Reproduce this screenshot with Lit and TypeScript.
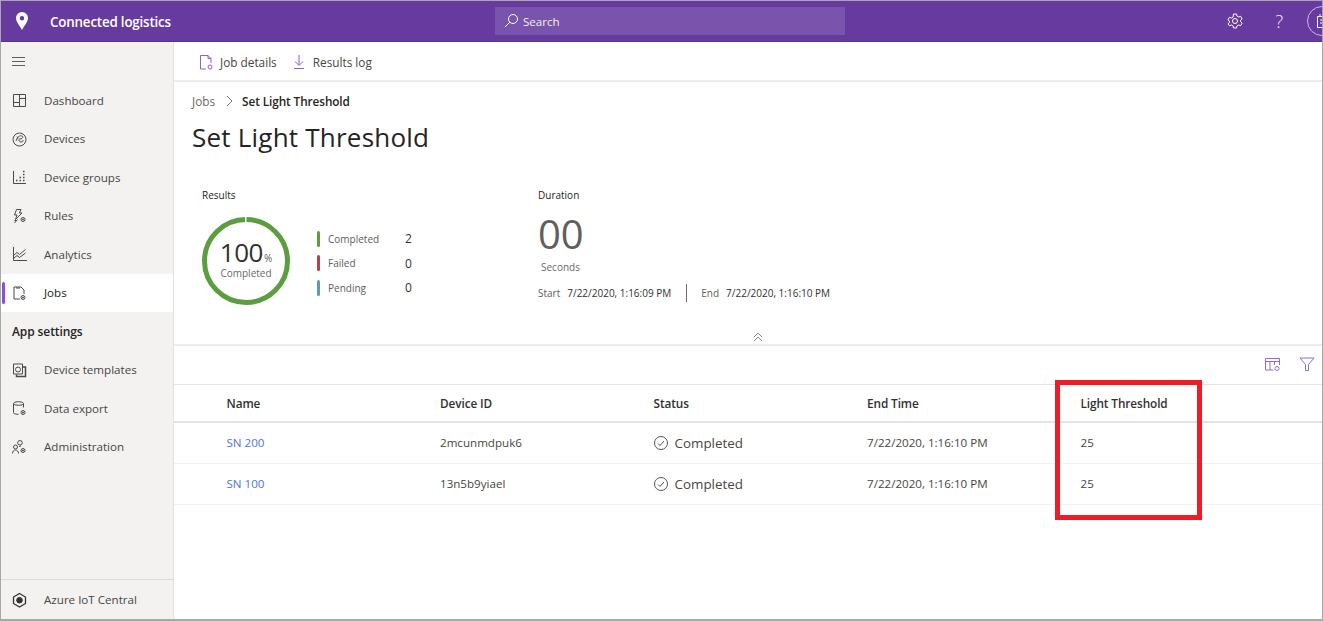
import { LitElement, html, css, svg } from "lit";
import { customElement } from "lit/decorators.js";

const ic = (body: unknown, size = 16, vb = 16) => html`<svg class="ic" width=${size} height=${size} viewBox="0 0 ${vb} ${vb}" fill="none" stroke="currentColor" stroke-width="1">${body}</svg>`;

const gear = (x: number, y: number) => svg`<circle cx=${x} cy=${y} r="2" /><circle cx=${x} cy=${y} r="0.6" fill="currentColor"/>`;

const icons = {
  dashboard: svg`<path d="M2.500 2.500h12v12h-12zM2.500 10.500h6M8.500 2.500v12M8.500 6.500h6"/>`,
  devices: svg`<circle cx="8.500" cy="8.500" r="6.500"/><path d="M5 10c1-4 4-6 6-5s0 3-2 3 -1 3 1 3 2-1 2-2M6 5.500c1 1 1 2 0 3"/>`,
  groups: svg`<path d="M2.500 2v12.500H15"/><path d="M5 11.500h1.500M8.500 11.500h1.500M12 11.500h1.500M8.500 8.500h1.500M12 8.500h1.500M12 5.500h1.500M12 2.500h1.500" stroke-width="1.500"/>`,
  rules: svg`<path d="M5.500 1.500h4.500L8.500 5H11L4.500 11.500 6 7H3.500z"/><path d="M6.500 11.500L3.500 15M3.500 12.500h2"/>${gear(12, 11.5)}`,
  analytics: svg`<path d="M2.500 1v13.500H16"/><path d="M2.500 9.500l3.500-3 2.500 2 6-5M2.500 12.500l3.500-3 2.500 2 6-4.500"/>`,
  jobs: svg`<path d="M9 14H3V2h7l3 3v4"/><path d="M6 2v2M8 2v2"/>${gear(12, 12.500)}`,
  templates: svg`<path d="M2.500 2h9v10h-9z"/><path d="M12 5h2.500v9.500H5.500V12.500" stroke-width="1.500"/><circle cx="7" cy="7.500" r="2.500"/>`,
  exportData: svg`<ellipse cx="7.500" cy="3.500" rx="5" ry="1.800"/><path d="M2.500 3.500v9c0 1 1.500 1.800 5 1.800M12.500 3.500v4"/>${gear(12, 12.500)}`,
  admin: svg`<circle cx="9" cy="3.800" r="2.300"/><circle cx="4.500" cy="8" r="2"/><path d="M1.500 14.500c0-2 1.300-3.500 3-3.500s3 1.500 3 3.500M8 8c.5-.8 1-1 2-1"/>${gear(12, 11.500)}`,
  azure: svg`<path d="M8.500 1.500l6 3.500v6.500l-6 3.500-6-3.500V5z" stroke-width="1.300"/><circle cx="8.500" cy="8.200" r="2.800" fill="currentColor"/>`,
};

type NavKey = keyof typeof icons;
const top: [NavKey, string][] = [
  ["dashboard", "Dashboard"], ["devices", "Devices"], ["groups", "Device groups"],
  ["rules", "Rules"], ["analytics", "Analytics"],
];
const settings: [NavKey, string][] = [
  ["templates", "Device templates"], ["exportData", "Data export"], ["admin", "Administration"],
];

const rows = [
  ["SN 200", "2mcunmdpuk6"],
  ["SN 100", "13n5b9yiael"],
];

@customElement("app-root")
export class AppRoot extends LitElement {
  static styles = css`
    :host { display: block; width: 1323px; height: 621px; position: relative; overflow: hidden; background: #fff;
      font-family: "Open Sans", "Noto Sans", sans-serif; color: #323130; font-size: 11.6px; box-sizing: border-box; }
    * { box-sizing: border-box; }
    .ic { display: block; flex: none; }
    .frame { height: 100%; display: flex; flex-direction: column; border: 1px solid #a8a8a8; border-width: 1px 1px 2px 1px; }
    .hdr { height: 41px; flex: none; background: #673aa0; color: #fff; display: flex; align-items: center; border-bottom: 1px solid #5a3290; position: relative; overflow: hidden; }
    .pin { margin-left: 14px; width: 14px; }
    .brand { margin-left: 21px; font-size: 13.4px; font-weight: 600; width: 445px; letter-spacing: -0.2px; white-space: nowrap; padding-top: 2px; }
    .search { width: 350px; height: 28px; background: #7a53ad; display: flex; align-items: center; padding-left: 8px; gap: 4px; font-size: 11.6px; color: #f1ecf7; }
    .hdr-right { margin-left: auto; display: flex; align-items: center; }
    .gear { margin-right: 32px; }
    .q { font-size: 18px; margin-right: 24px; line-height: 1; font-weight: 300; color: #f3eef9; }
    .avatar { width: 30px; height: 30px; border: 1px solid #c9b8e0; border-radius: 50%; margin-right: -15px; display: flex; align-items: center; padding-left: 8px; }
    .body { flex: 1; display: flex; min-height: 0; }
    .side { width: 173px; flex: none; background: #f3f2f1; border-right: 1px solid #e4e2e0; display: flex; flex-direction: column; }
    .burger { height: 39px; padding-left: 10px; display: flex; align-items: center; color: #605e5c; flex: none; }
    .nav { height: 38.500px; flex: none; display: flex; align-items: center; color: #484644; position: relative; white-space: nowrap; }
    .nav .ic { margin-left: 10px; margin-right: 17px; color: #4a4a4a; }
    .nav.active { background: #fff; color: #252423; }
    .nav.active::before { content: ""; position: absolute; left: 1px; top: 8px; bottom: 8px; width: 3px; background: #8a4fe0; border-radius: 2px; }
    .section { height: 38.500px; flex: none; display: flex; align-items: center; padding-left: 11px; color: #252423; font-weight: 600; font-size: 12px; letter-spacing: -0.1px; }
    .side-foot { margin-top: auto; height: 40px; border-top: 1px solid #dcdad8; display: flex; align-items: center; color: #484644; }
    .side-foot .ic { margin-left: 10px; margin-right: 17px; color: #333; }
    .main { flex: 1; min-width: 0; display: flex; flex-direction: column; }
    .tools { height: 40px; flex: none; border-bottom: 2px solid #ececec; display: flex; align-items: center; padding-left: 24px; color: #484644; padding-top: 1px; font-size: 11.800px; }
    .tool { display: flex; align-items: center; gap: 6px; margin-right: 14px; }
    .tool .ic { color: #8a5ce0; }
    .crumb { display: flex; align-items: center; margin: 9px 0 0 18px; height: 20px; font-size: 11.800px; }
    .crumb .jobs { color: #6b6967; }
    .crumb .ic { margin: 0 7px 0 8px; color: #777; }
    .crumb b { font-weight: 600; color: #252423; letter-spacing: -0.1px; }
    h1 { margin: 7px 0 0 18px; font-size: 26px; font-weight: 400; line-height: 38px; color: #252423; letter-spacing: 0.22px; }
    .summary { display: flex; margin-top: 32px; height: 147px; flex: none; }
    .results { width: 364px; padding-left: 28px; }
    .lbl { font-size: 10px; line-height: 14px; color: #252423; }
    .res-row { display: flex; align-items: center; margin-top: 15px; }
    .ring { width: 88px; height: 88px; position: relative; flex: none; }
    .ring svg { position: absolute; left: 0; top: 0; }
    .ring-text { position: absolute; inset: 0; display: flex; flex-direction: column; align-items: center; justify-content: center; }
    .pct { font-size: 26px; line-height: 26px; color: #323130; margin: -5px 0 -4px; letter-spacing: -0.5px; }
    .pct small { font-size: 10px; color: #605e5c; margin-left: 1px; letter-spacing: 0; }
    .ring-text span.c { font-size: 10px; line-height: 12px; color: #6b6967; }
    .legend { margin-left: 27px; margin-top: 4px; display: flex; flex-direction: column; gap: 8.500px; }
    .lg { display: flex; align-items: center; height: 16px; font-size: 10px; color: #605e5c; }
    .bar { width: 3px; height: 16px; border-radius: 2px; margin-right: 8px; }
    .lg span { width: 77px; }
    .lg b { font-weight: 400; font-size: 12px; color: #323130; }
    .duration { flex: 1; }
    .dur-num { font-size: 40px; line-height: 48px; color: #5f5f5f; margin-top: 8px; letter-spacing: 0; }
    .secs { font-size: 10px; line-height: 14px; color: #6b6967; margin-left: 3px; margin-top: 2px; }
    .times { display: flex; align-items: center; font-size: 10px; margin-top: 10px; color: #323130; height: 18px; }
    .times .k { color: #605e5c; margin-right: 7px; }
    .times .sep { width: 1px; height: 18px; background: #6b6967; margin: 0 14px 0 15px; }
    .collapse { height: 12px; display: flex; justify-content: center; color: #8f8d8b; flex: none; margin-top: -3px; padding-left: 20px; }
    .line { height: 2px; background: #ececec; flex: none; }
    .tbl-tools { height: 39px; flex: none; display: flex; justify-content: flex-end; align-items: center; gap: 19px; padding-right: 7px; color: #8a6ce0; border-bottom: 1px solid #e4e4e4; padding-bottom: 2px; }
    .tr { display: grid; grid-template-columns: repeat(5, 213.500px); padding-left: 52.500px; align-items: center; border-bottom: 1px solid #f1f1f1; }
    .th { height: 38px; font-weight: 600; font-size: 11.800px; color: #323130; border-bottom: 2px solid #e4e4e4; letter-spacing: -0.1px; }
    .td { height: 41px; color: #484644; padding-bottom: 2px; }
    .td a { color: #4a74e8; text-decoration: none; }
    .status { display: flex; align-items: center; gap: 7px; font-size: 13.400px; color: #484644; margin-bottom: -2px; }
    .status .ic { color: #555; }
    .mark { position: absolute; left: 1055px; top: 380px; width: 147px; height: 140px; border: 5px solid #ee1c25; }
  `;

  render() {
    return html`
      <div class="frame">
        <header class="hdr">
          <svg class="pin" width="14" height="18" viewBox="0 0 14 18"><path fill="#fff" fill-rule="evenodd" d="M7 0a6 6 0 0 1 6 6c0 4-4 8-6 12C5 14 1 10 1 6a6 6 0 0 1 6-6zm0 4a2.200 2.200 0 1 0 0 4.400A2.200 2.200 0 0 0 7 4z"/></svg>
          <div class="brand">Connected logistics</div>
          <div class="search">
            <svg width="16" height="16" viewBox="0 0 16 16" fill="none" stroke="#fff"><circle cx="10" cy="6" r="4.500"/><path d="M6.800 9.200 2 14"/></svg>
            Search
          </div>
          <div class="hdr-right">
            <svg class="gear" width="16" height="16" viewBox="0 0 16 16" fill="none" stroke="#fff"><circle cx="8" cy="8" r="2.500"/><path d="M6.500 1h3l.4 2 1.700 1 2-.7 1.500 2.600-1.500 1.300v1.600l1.500 1.300-1.500 2.600-2-.7-1.700 1-.4 2h-3l-.4-2-1.700-1-2 .7L.9 10.900l1.500-1.300V8L.9 6.900l1.500-2.600 2 .7 1.700-1z"/></svg>
            <span class="q">?</span>
            <div class="avatar"><svg width="14" height="16" viewBox="0 0 14 16" fill="none" stroke="#fff"><path d="M1.500 3.500h11v11h-11zM4 1v3M10 1v3M4 7h6M4 10h4"/></svg></div>
          </div>
        </header>
        <div class="body">
          <nav class="side">
            <div class="burger">${ic(svg`<path d="M1 3.500h13M1 7.500h13M1 11.500h13" />`, 15, 15)}</div>
            ${top.map(([k, t]) => html`<div class="nav">${ic(icons[k])}${t}</div>`)}
            <div class="nav active">${ic(icons.jobs)}Jobs</div>
            <div class="section">App settings</div>
            ${settings.map(([k, t]) => html`<div class="nav">${ic(icons[k])}${t}</div>`)}
            <div class="side-foot">${ic(icons.azure)}Azure IoT Central</div>
          </nav>
          <main class="main">
            <div class="tools">
              <div class="tool">${ic(svg`<path d="M8 15H2.500V1.500H10l3 3V9M10 1.500v3h3"/><circle cx="12" cy="13" r="2"/>`)}Job details</div>
              <div class="tool">${ic(svg`<path d="M8 1v10M4 7.500 8 11.500l4-4M3 14.500h10"/>`)}Results log</div>
            </div>
            <div class="crumb"><span class="jobs">Jobs</span>${ic(svg`<path d="M4 1l5 5-5 5"/>`, 12, 12)}<b>Set Light Threshold</b></div>
            <h1>Set Light Threshold</h1>
            <section class="summary">
              <div class="results">
                <div class="lbl">Results</div>
                <div class="res-row">
                  <div class="ring">
                    <svg width="88" height="88" viewBox="0 0 88 88"><circle cx="44" cy="44" r="41.500" fill="none" stroke="#5c9e3f" stroke-width="5"/><rect x="43" y="0" width="1.500" height="6" fill="#fff"/></svg>
                    <div class="ring-text">
                      <span class="pct">100<small>%</small></span>
                      <span class="c">Completed</span>
                    </div>
                  </div>
                  <div class="legend">
                    <div class="lg"><i class="bar" style="background:#5c9e3f"></i><span>Completed</span><b>2</b></div>
                    <div class="lg"><i class="bar" style="background:#b9404f"></i><span>Failed</span><b>0</b></div>
                    <div class="lg"><i class="bar" style="background:#5c9bb0"></i><span>Pending</span><b>0</b></div>
                  </div>
                </div>
              </div>
              <div class="duration">
                <div class="lbl">Duration</div>
                <div class="dur-num">00</div>
                <div class="secs">Seconds</div>
                <div class="times">
                  <span class="k">Start</span>7/22/2020, 1:16:09 PM<i class="sep"></i><span class="k">End</span>7/22/2020, 1:16:10 PM
                </div>
              </div>
            </section>
            <div class="collapse">${ic(svg`<path d="M1 5l4-4 4 4M1 9l4-4 4 4"/>`, 10, 10)}</div>
            <div class="line"></div>
            <div class="tbl-tools">
              ${ic(svg`<path d="M9 14H1.500V2.500h14V9M1.500 5.500h14M6 5.500V14M10.500 5.500V9"/><circle cx="13" cy="12.500" r="2"/>`)}
              ${ic(svg`<path d="M1 2h14L9.500 8.500V14.500h-3V8.500z"/>`)}
            </div>
            <div class="tr th"><div>Name</div><div>Device ID</div><div>Status</div><div>End Time</div><div>Light Threshold</div></div>
            ${rows.map(([n, id]) => html`
              <div class="tr td">
                <div><a href="#">${n}</a></div>
                <div>${id}</div>
                <div class="status">${ic(svg`<circle cx="7" cy="7" r="6.500"/><path d="M4 7.500l2 2 4-4.500"/>`, 14, 14)}Completed</div>
                <div>7/22/2020, 1:16:10 PM</div>
                <div>25</div>
              </div>`)}
          </main>
        </div>
      </div>
      <div class="mark"></div>
    `;
  }
}
